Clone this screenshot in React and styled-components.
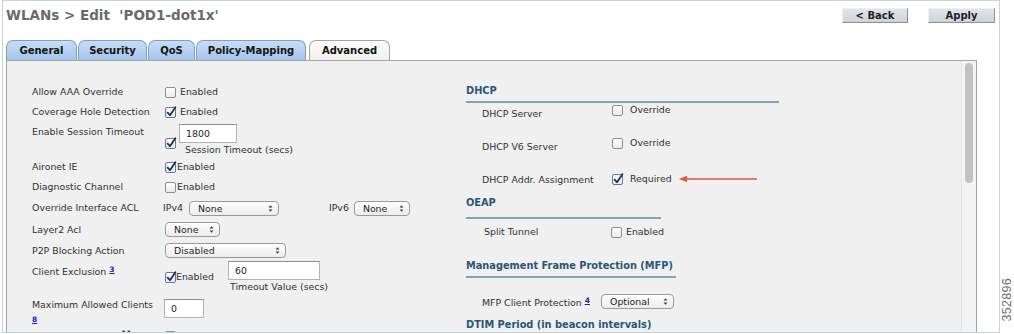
import React from "react";
import styled, { createGlobalStyle } from "styled-components";

const Global = createGlobalStyle`
  body {
    margin: 0;
    background: #ffffff;
    font-family: "DejaVu Sans", Verdana, sans-serif;
  }
`;

const Page = styled.div`
  display: flex;
  width: 1014px;
  height: 334px;
  padding-left: 2px;
  box-sizing: border-box;
`;

const Frame = styled.div`
  width: 998px;
  height: 333px;
  box-sizing: border-box;
  border: 1px solid #c6d2dc;
  display: flex;
  flex-direction: column;
  overflow: hidden;
  padding: 0 4px 0 3px;
`;

const TopBar = styled.div`
  height: 39px;
  display: flex;
  align-items: flex-start;
  justify-content: space-between;
  padding-top: 6px;
  box-sizing: border-box;
`;

const Title = styled.div`
  font-weight: bold;
  font-size: 13.5px;
  line-height: 16px;
  color: #6a6a6a;
  white-space: pre;
`;

const Buttons = styled.div`
  display: flex;
  gap: 20px;
  margin-top: 1px;
`;

const Button = styled.div`
  width: ${(p) => p.$w}px;
  height: 15px;
  box-sizing: border-box;
  background: linear-gradient(#e2e4e9, #cfd2d9);
  border-top: 1px solid #eef0f3;
  border-left: 1px solid #eef0f3;
  border-right: 1px solid #8b8d92;
  border-bottom: 1px solid #8b8d92;
  font-weight: bold;
  font-size: 10px;
  line-height: 13px;
  text-align: center;
  color: #1d1d1d;
`;

const TabRow = styled.div`
  display: flex;
  height: 20px;
  align-items: flex-end;
`;

const Tab = styled.div`
  width: ${(p) => p.$w}px;
  margin-right: ${(p) => p.$mr || 0}px;
  height: 20px;
  box-sizing: border-box;
  border: 1px solid ${(p) => (p.$active ? "#a3a3a3" : "#7d9fc6")};
  border-bottom: none;
  border-radius: 7px 7px 0 0;
  background: ${(p) =>
    p.$active
      ? "linear-gradient(#fbfbfa, #f0f0ee)"
      : "linear-gradient(#c7dcf4, #a4c5ec)"};
  font-weight: bold;
  font-size: 10px;
  line-height: 19px;
  text-align: center;
  color: #141414;
`;

const Panel = styled.div`
  width: 971px;
  flex: 1;
  min-height: 0;
  box-sizing: border-box;
  border: 1px solid #a4a4a4;
  border-bottom: none;
  background: #eff0ef;
  display: flex;
`;

const PanelBody = styled.div`
  flex: 1;
  display: flex;
  padding: 21px 0 0 25px;
  color: #303030;
  font-size: 9.4px;
  line-height: 14px;
`;

const ScrollTrack = styled.div`
  width: 15px;
  flex: none;
  background: #f3f3f3;
  border-left: 1px solid #e4e4e4;
  box-sizing: border-box;
  padding: 2px 0 0 3px;
`;

const ScrollThumb = styled.div`
  width: 8px;
  height: 120px;
  border-radius: 4px;
  background: #c2c2c2;
`;

const LeftCol = styled.div`
  width: 434px;
  flex: none;
`;

const RightCol = styled.div`
  flex: 1;
  padding-top: 2px;
`;

const Row = styled.div`
  display: grid;
  grid-template-columns: ${(p) => p.$cols || "133px 1fr"};
  height: ${(p) => p.$h}px;
  align-items: ${(p) => (p.$top ? "start" : "center")};
  padding-left: ${(p) => p.$pl || 0}px;
`;

const Label = styled.div`
  padding-top: ${(p) => p.$pt || 0}px;
  white-space: nowrap;
`;

const Control = styled.div`
  display: flex;
  align-items: ${(p) => p.$align || "center"};
  gap: ${(p) => p.$gap ?? 4}px;
  padding-top: ${(p) => p.$pt || 0}px;
  margin-left: ${(p) => p.$ml || 0}px;
  white-space: nowrap;
`;

const Link = styled.span`
  color: #1c1cd6;
  text-decoration: underline;
  font-weight: bold;
  font-size: 7.5px;
  position: relative;
  top: ${(p) => (p.$sup ? -3 : 0)}px;
  margin-left: ${(p) => (p.$sup ? 3 : 0)}px;
`;

const BoxWrap = styled.span`
  display: inline-block;
  width: 11px;
  height: 11px;
  box-sizing: border-box;
  border: 1px solid ${(p) => (p.$checked ? "#6478a0" : "#8e8e8e")};
  border-radius: 2px;
  background: linear-gradient(#ffffff, #eaeaea);
  flex: none;
  position: relative;
  margin-top: ${(p) => p.$mt || 0}px;

  svg {
    position: absolute;
    left: 0;
    top: -2px;
    overflow: visible;
  }
`;

const Checkbox = ({ checked, mt }) => (
  <BoxWrap $checked={checked} $mt={mt}>
    {checked && (
      <svg width="11" height="11" viewBox="0 0 11 11">
        <path
          d="M1.6 6.6 L4 9.2 L9.4 1.2"
          fill="none"
          stroke="#1e2c57"
          strokeWidth="1.8"
          strokeLinecap="round"
          strokeLinejoin="round"
        />
      </svg>
    )}
  </BoxWrap>
);

const CheckItem = styled.div`
  display: flex;
  align-items: center;
  gap: ${(p) => p.$gap ?? 0}px;
  width: ${(p) => (p.$w ? `${p.$w}px` : "auto")};
  margin-top: ${(p) => p.$mt || 0}px;
  flex: none;
`;

const SelectBox = styled.div`
  display: flex;
  align-items: center;
  justify-content: space-between;
  width: ${(p) => p.$w}px;
  height: 15px;
  box-sizing: border-box;
  border: 1px solid #9a9a9a;
  border-radius: 4px;
  background: linear-gradient(#fefefe, #ececec);
  padding: 0 5px 0 8px;
  margin-left: ${(p) => p.$ml || 0}px;
  color: #222;
  line-height: 13px;
  flex: none;
`;

const Select = ({ w, ml, children }) => (
  <SelectBox $w={w} $ml={ml}>
    <span>{children}</span>
    <svg width="5" height="9" viewBox="0 0 5 9">
      <path d="M0.6 3.6 L2.5 1.2 L4.4 3.6 Z" fill="#3a3a3a" />
      <path d="M0.6 5.4 L2.5 7.8 L4.4 5.4 Z" fill="#3a3a3a" />
    </svg>
  </SelectBox>
);

const InputStack = styled.div`
  display: flex;
  flex-direction: column;
  margin-top: ${(p) => p.$mt || 0}px;
`;

const TextInput = styled.div`
  width: ${(p) => p.$w}px;
  height: 19px;
  box-sizing: border-box;
  background: #ffffff;
  border: 1px solid #b3b3b3;
  border-top-color: #8f8f8f;
  padding-left: 6px;
  line-height: 17px;
  color: #222;
  margin-top: ${(p) => p.$mt || 0}px;
`;

const Caption = styled.div`
  margin-left: ${(p) => p.$ml || 0}px;
`;

const SideText = styled.span`
  margin-left: ${(p) => p.$ml || 0}px;
`;

const SecHead = styled.div`
  width: ${(p) => p.$w}px;
  margin-top: ${(p) => p.$mt || 0}px;
  padding-bottom: ${(p) => p.$pb || 0}px;
  border-bottom: ${(p) => (p.$line ? "2px solid #84a1b7" : "none")};
  font-weight: bold;
  font-size: 9.8px;
  line-height: 14px;
  color: #2a5679;
  white-space: nowrap;
`;

const Side = styled.div`
  width: 14px;
  height: 333px;
  display: flex;
  flex-direction: column;
  justify-content: flex-end;
  align-items: center;
  padding-bottom: 11px;
  box-sizing: border-box;
`;

const DocNumber = styled.div`
  writing-mode: vertical-rl;
  transform: rotate(180deg);
  font-family: "Liberation Sans", Arial, sans-serif;
  font-size: 12.5px;
  letter-spacing: 0.3px;
  color: #6e6e6e;
`;

const Arrow = () => (
  <svg width="78" height="8" viewBox="0 0 78 8" style={{ marginLeft: 0 }}>
    <path d="M6 4 L78 4" stroke="#e4553f" strokeWidth="1.6" />
    <path d="M0 4 L8 0.8 L8 7.2 Z" fill="#e4553f" />
  </svg>
);

export default function App() {
  return (
    <>
      <Global />
      <Page>
        <Frame>
          <TopBar>
            <Title>{"WLANs > Edit\u00a0\u00a0'POD1-dot1x'"}</Title>
            <Buttons>
              <Button $w={66}>&lt; Back</Button>
              <Button $w={67}>Apply</Button>
            </Buttons>
          </TopBar>
          <TabRow>
            <Tab $w={71} $mr={1}>General</Tab>
            <Tab $w={69} $mr={1}>Security</Tab>
            <Tab $w={47} $mr={1}>QoS</Tab>
            <Tab $w={110} $mr={3}>Policy-Mapping</Tab>
            <Tab $w={81} $active>Advanced</Tab>
          </TabRow>
          <Panel>
            <PanelBody>
              <LeftCol>
                <Row $h={20}>
                  <Label>Allow AAA Override</Label>
                  <Control>
                    <Checkbox />
                    <span>Enabled</span>
                  </Control>
                </Row>
                <Row $h={20}>
                  <Label>Coverage Hole Detection</Label>
                  <Control>
                    <Checkbox checked />
                    <span>Enabled</span>
                  </Control>
                </Row>
                <Row $h={35} $top>
                  <Label $pt={3}>Enable Session Timeout</Label>
                  <Control $align="flex-start" $gap={3}>
                    <Checkbox checked mt={16} />
                    <InputStack>
                      <TextInput $w={58} $mt={2}>1800</TextInput>
                      <Caption $ml={6}>Session Timeout (secs)</Caption>
                    </InputStack>
                  </Control>
                </Row>
                <Row $h={20}>
                  <Label>Aironet IE</Label>
                  <Control $gap={1}>
                    <Checkbox checked />
                    <span>Enabled</span>
                  </Control>
                </Row>
                <Row $h={20}>
                  <Label>Diagnostic Channel</Label>
                  <Control $gap={1}>
                    <Checkbox />
                    <span>Enabled</span>
                  </Control>
                </Row>
                <Row $h={22}>
                  <Label>Override Interface ACL</Label>
                  <Control $gap={0} $ml={-2}>
                    <span>IPv4</span>
                    <Select w={90} ml={6}>None</Select>
                    <SideText $ml={50}>IPv6</SideText>
                    <Select w={56} ml={5}>None</Select>
                  </Control>
                </Row>
                <Row $h={21}>
                  <Label>Layer2 Acl</Label>
                  <Control>
                    <Select w={55}>None</Select>
                  </Control>
                </Row>
                <Row $h={21}>
                  <Label>P2P Blocking Action</Label>
                  <Control>
                    <Select w={121}>Disabled</Select>
                  </Control>
                </Row>
                <Row $h={35} $top>
                  <Label $pt={4}>
                    Client Exclusion<Link $sup>3</Link>
                  </Label>
                  <Control $align="flex-start" $gap={0}>
                    <CheckItem $w={63} $mt={9}>
                      <Checkbox checked />
                      <span>Enabled</span>
                    </CheckItem>
                    <InputStack>
                      <TextInput $w={92}>60</TextInput>
                      <Caption $ml={2}>Timeout Value (secs)</Caption>
                    </InputStack>
                  </Control>
                </Row>
                <Row $h={30} $top>
                  <Label $pt={2}>
                    Maximum Allowed Clients
                    <br />
                    <Link>8</Link>
                  </Label>
                  <Control $pt={3} $ml={-1}>
                    <TextInput $w={40}>0</TextInput>
                  </Control>
                </Row>
                <Row $h={20}>
                  <Label>
                    Static IP Tunneling<Link $sup>11</Link>
                  </Label>
                  <Control $gap={1}>
                    <Checkbox />
                    <span>Enabled</span>
                  </Control>
                </Row>
              </LeftCol>
              <RightCol>
                <SecHead $w={313} $pb={3} $line>
                  DHCP
                </SecHead>
                <Row $h={33} $top $cols="130px 1fr" $pl={16}>
                  <Label $pt={4}>DHCP Server</Label>
                  <Control $gap={7}>
                    <Checkbox />
                    <span>Override</span>
                  </Control>
                </Row>
                <Row $h={33} $top $cols="130px 1fr" $pl={16}>
                  <Label $pt={4}>DHCP V6 Server</Label>
                  <Control $gap={7}>
                    <Checkbox />
                    <span>Override</span>
                  </Control>
                </Row>
                <Row $h={27} $top $cols="130px 1fr" $pl={16}>
                  <Label $pt={4}>DHCP Addr. Assignment</Label>
                  <Control $gap={7} $pt={3}>
                    <Checkbox checked />
                    <span>Required</span>
                    <Arrow />
                  </Control>
                </Row>
                <SecHead $w={195} $pb={7} $line>
                  OEAP
                </SecHead>
                <Row $h={26} $cols="127px 1fr" $pl={18}>
                  <Label>Split Tunnel</Label>
                  <Control $gap={4}>
                    <Checkbox />
                    <span>Enabled</span>
                  </Control>
                </Row>
                <SecHead $w={210} $mt={14} $pb={3} $line>
                  Management Frame Protection (MFP)
                </SecHead>
                <Row $h={37} $top $cols="119px 1fr" $pl={16}>
                  <Label $pt={18}>
                    MFP Client Protection<Link $sup>4</Link>
                  </Label>
                  <Control $pt={16}>
                    <Select w={73}>Optional</Select>
                  </Control>
                </Row>
                <SecHead $w={300} $mt={3}>
                  DTIM Period (in beacon intervals)
                </SecHead>
              </RightCol>
            </PanelBody>
            <ScrollTrack>
              <ScrollThumb />
            </ScrollTrack>
          </Panel>
        </Frame>
        <Side>
          <DocNumber>352896</DocNumber>
        </Side>
      </Page>
    </>
  );
}
